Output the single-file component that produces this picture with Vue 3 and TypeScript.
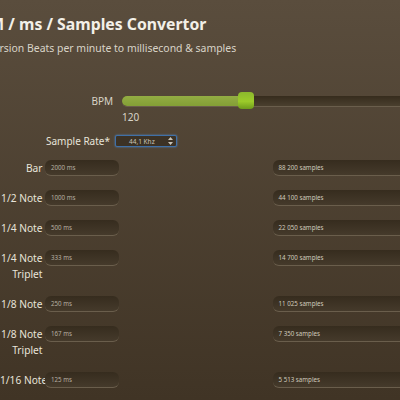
<script setup lang="ts">
interface Row { label: string; sub?: string; ms: string; samples: string }
const rows: Row[] = [
  { label: 'Bar', ms: '2000 ms', samples: '88 200 samples' },
  { label: '1/2 Note', ms: '1000 ms', samples: '44 100 samples' },
  { label: '1/4 Note', ms: '500 ms', samples: '22 050 samples' },
  { label: '1/4 Note', sub: 'Triplet', ms: '333 ms', samples: '14 700 samples' },
  { label: '1/8 Note', ms: '250 ms', samples: '11 025 samples' },
  { label: '1/8 Note', sub: 'Triplet', ms: '167 ms', samples: '7 350 samples' },
  { label: '1/16 Note', ms: '125 ms', samples: '5 513 samples' },
]
</script>

<template>
  <main class="page">
    <h1 class="title">BPM / ms / Samples Convertor</h1>
    <p class="intro">Conversion Beats per minute to millisecond &amp; samples</p>

    <section class="bpm">
      <span class="bpm-label">BPM</span>
      <div class="slider">
        <div class="fill"></div>
        <div class="thumb"></div>
      </div>
    </section>
    <div class="bpm-value">120</div>

    <section class="rate">
      <span class="rate-label">Sample Rate*</span>
      <div class="select">
        <span>44,1 Khz</span>
        <svg class="arrows" width="5" height="8" viewBox="0 0 5 8"><path d="M2.5 0L5 3H0zM2.5 8L0 5h5z" fill="#c9c4b8" /></svg>
      </div>
    </section>

    <section class="rows">
      <div v-for="(r, i) in rows" :key="i" class="row">
        <div class="label">{{ r.label }}<template v-if="r.sub"><br />{{ r.sub }}</template></div>
        <div class="field ms">{{ r.ms }}</div>
        <div class="field samples">{{ r.samples }}</div>
      </div>
    </section>
  </main>
</template>

<style>
html, body { margin: 0; overflow: hidden; }
</style>

<style scoped>
.page {
  width: 400px;
  height: 400px;
  overflow: hidden;
  box-sizing: border-box;
  padding-top: 14px;
  background: linear-gradient(180deg, #5a4d3d 0%, #403425 100%);
  font-family: "Noto Sans", "Open Sans", sans-serif;
  color: #e8e4da;
}
.title {
  margin: 0 0 0 -31px;
  font-size: 15.8px;
  line-height: 21px;
  font-weight: 700;
  color: #f3f0e8;
  white-space: nowrap;
}
.intro {
  margin: 5px 0 0 -31px;
  font-size: 10.45px;
  line-height: 16px;
  color: #d9d4c8;
  white-space: nowrap;
}
.bpm {
  display: flex;
  align-items: center;
  margin-top: 37px;
  height: 16px;
}
.bpm-label {
  width: 113px;
  text-align: right;
  font-size: 10px;
  line-height: 18px;
  color: #d9d4c8;
}
.slider {
  position: relative;
  margin-left: 9px;
  flex: 1;
  height: 10px;
  border-radius: 5px 0 0 5px;
  background: linear-gradient(180deg, #362c1d 0%, #4a3f2e 100%);
  border-bottom: 1px solid #6a5e4c;
}
.fill {
  width: 122px;
  height: 100%;
  border-radius: 5px 0 0 5px;
  background: linear-gradient(180deg, #93ad43 0%, #839f36 100%);
}
.thumb {
  position: absolute;
  left: 116px;
  top: -4px;
  width: 16px;
  height: 17px;
  border-radius: 4px;
  background: linear-gradient(180deg, #8cb82d 0%, #9ccb2a 55%, #6f9b1c 100%);
}
.bpm-value {
  margin: 1px 0 0 122px;
  font-size: 10px;
  line-height: 14px;
  color: #d9d4c8;
}
.rate {
  display: flex;
  align-items: center;
  margin-top: 9px;
  height: 16px;
}
.rate-label {
  width: 110px;
  text-align: right;
  font-size: 10px;
  color: #e8e4da;
  white-space: nowrap;
}
.select {
  display: flex;
  align-items: center;
  justify-content: space-between;
  box-sizing: border-box;
  margin-left: 5px;
  width: 62px;
  height: 12px;
  padding: 0 3px 0 13px;
  border: 1px solid #3f70a8;
  box-shadow: 0 0 2px #5a88c0;
  border-radius: 2px;
  background: #3c3225;
  font-size: 6.5px;
  color: #c9c4b8;
}
.rows {
  margin-top: 11px;
}
.row {
  display: grid;
  grid-template-columns: 42.5px 74px 140px;
  column-gap: 2.5px;
  margin-bottom: 14px;
  align-items: start;
}
.label {
  font-size: 10.2px;
  line-height: 16px;
  white-space: nowrap;
  text-align: right;
  direction: rtl;
  unicode-bidi: plaintext;
}
.field {
  box-sizing: border-box;
  height: 16px;
  line-height: 16px;
  padding-left: 6px;
  border-radius: 6px;
  border-bottom: 1px solid #6a5e4c;
  background: linear-gradient(180deg, #362c1e 0%, #453a2b 100%);
  font-size: 6.2px;
  color: #b5afa2;
}
.ms { width: 74px; }
.samples {
  margin-left: 151px;
  width: 140px;
  border-radius: 6px 0 0 6px;
  color: #cfcabd;
}
</style>
